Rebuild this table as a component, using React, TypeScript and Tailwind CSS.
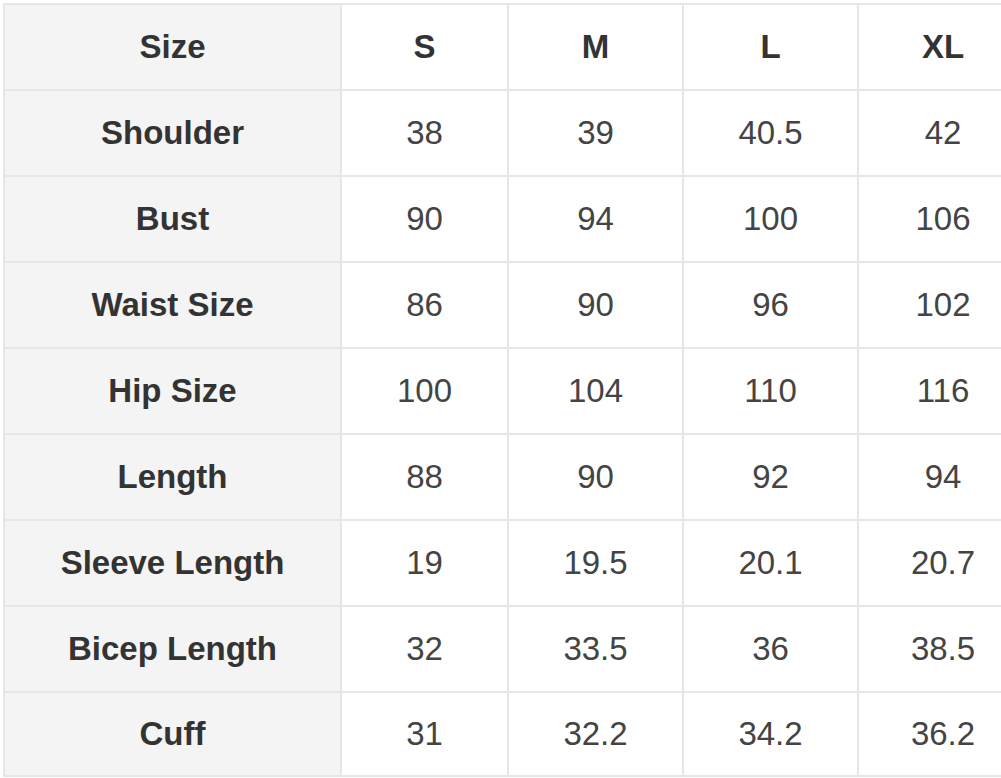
const header = ["Size", "S", "M", "L", "XL"];

const rows: [string, string, string, string, string][] = [
  ["Shoulder", "38", "39", "40.5", "42"],
  ["Bust", "90", "94", "100", "106"],
  ["Waist Size", "86", "90", "96", "102"],
  ["Hip Size", "100", "104", "110", "116"],
  ["Length", "88", "90", "92", "94"],
  ["Sleeve Length", "19", "19.5", "20.1", "20.7"],
  ["Bicep Length", "32", "33.5", "36", "38.5"],
  ["Cuff", "31", "32.2", "34.2", "36.2"],
];

export default function App() {
  return (
    <div
      className="h-[778px] w-[1001px] overflow-hidden bg-white pl-[3px] pt-[3px]"
      style={{ fontFamily: '"Liberation Sans", Arial, sans-serif' }}
    >
      <div className="grid w-[1026px] grid-cols-[335px_165px_173px_173px_168px] grid-rows-[repeat(8,84px)_82px] gap-[2px] border-2 border-[#e6e6e6] bg-[#e6e6e6] text-[33px]">
        {/* Header row */}
        {header.map((h, i) => (
          <div
            key={h}
            className={`flex items-center justify-center font-bold text-[#333] ${
              i === 0 ? "bg-[#f4f4f4]" : "bg-white"
            }`}
          >
            {h}
          </div>
        ))}

        {/* Body rows */}
        {rows.map((r) =>
          r.map((cell, i) => (
            <div
              key={r[0] + i}
              className={
                i === 0
                  ? "flex items-center justify-center bg-[#f4f4f4] font-bold text-[#333]"
                  : "flex items-center justify-center bg-white text-[#444]"
              }
            >
              {cell}
            </div>
          ))
        )}
      </div>
    </div>
  );
}
